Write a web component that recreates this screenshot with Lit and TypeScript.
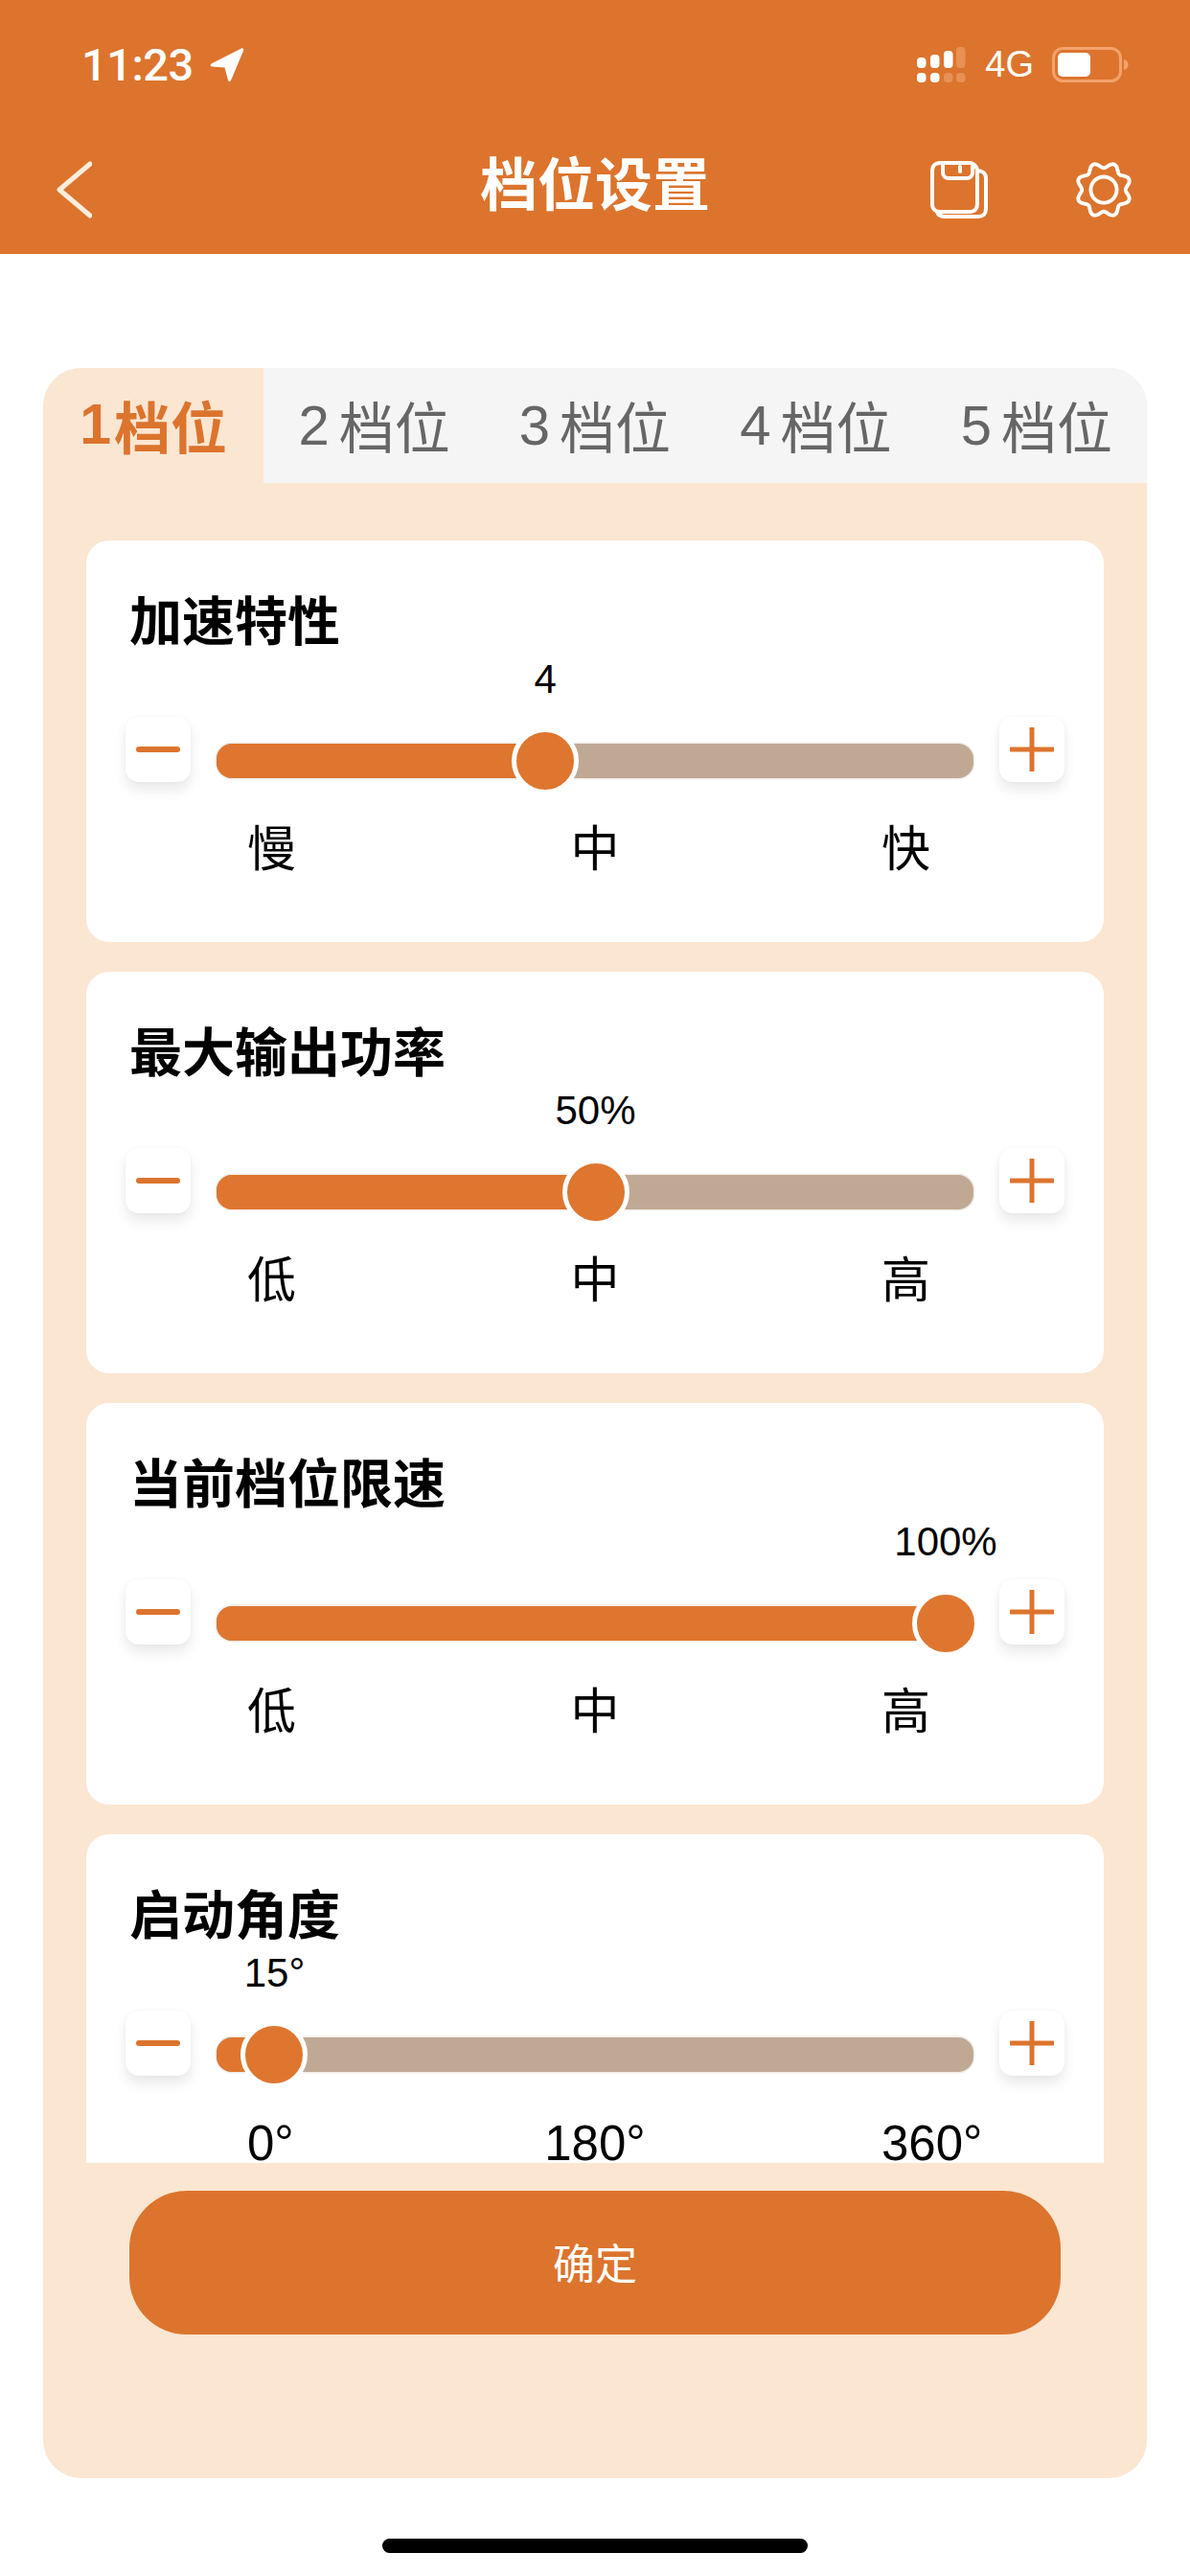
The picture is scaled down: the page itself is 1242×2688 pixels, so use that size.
import { LitElement, html, css, svg } from "lit";
import { customElement } from "lit/decorators.js";

interface Row { title: string; value: string; pct: number; labels: string[]; }

const ROWS: Row[] = [
  { title: "加速特性", value: "4", pct: 3 / 7, labels: ["慢", "中", "快"] },
  { title: "最大输出功率", value: "50%", pct: 0.5, labels: ["低", "中", "高"] },
  { title: "当前档位限速", value: "100%", pct: 1, labels: ["低", "中", "高"] },
  { title: "启动角度", value: "15°", pct: 15 / 360, labels: ["0°", "180°", "360°"] },
];

const TABS = ["1", "2", "3", "4", "5"];

function gearPath(): string {
  const pts: string[] = [];
  const n = 180;
  for (let i = 0; i < n; i++) {
    const t = (i / n) * Math.PI * 2;
    const r = 26.5 + 3 * Math.cos(8 * t + Math.PI);
    pts.push(`${(32 + r * Math.cos(t)).toFixed(2)},${(32 + r * Math.sin(t)).toFixed(2)}`);
  }
  return "M" + pts.join("L") + "Z";
}

@customElement("app-root")
export class AppRoot extends LitElement {
  static styles = css`
    :host {
      display: block;
      width: 1242px;
      height: 2688px;
      background: #fff;
      font-family: "Liberation Sans", "Noto Sans CJK SC", sans-serif;
      color: #000;
      overflow: hidden;
    }
    .header { height: 265px; background: #dc742d; color: #fff; display: flex; flex-direction: column; }
    .status { height: 130px; box-sizing: border-box; padding: 49px 64px 0 85px; display: flex; justify-content: space-between; align-items: flex-start; }
    .time-wrap { display: flex; align-items: center; gap: 17px; height: 37px; }
    .time { font-family: Roboto, "Liberation Sans", sans-serif; font-weight: 500; font-size: 47px; line-height: 37px; letter-spacing: -0.5px; }
    .sys { display: flex; align-items: center; height: 37px; }
    .net { font-size: 38px; line-height: 37px; margin: 0 19px 0 20px; }
    .nav { height: 135px; box-sizing: border-box; padding: 0 59px; display: grid; grid-template-columns: 1fr auto 1fr; align-items: center; }
    .title { font-size: 60px; font-weight: 700; line-height: 70px; margin-top: -5px; }
    .nav-right { display: flex; justify-content: flex-end; gap: 90px; align-items: center; }
    svg { display: block; }
    .panel { margin: 119px 45px 0; height: 2202px; background: #fbe6d2; border-radius: 40px; overflow: hidden; display: flex; flex-direction: column; }
    .tabs { height: 120px; flex: none; display: grid; grid-template-columns: repeat(5, 1fr); background: #f5f5f5; }
    .tab { display: flex; align-items: center; justify-content: center; font-size: 58px; color: #666; padding-bottom: 2px; }
    .tab .num { margin-right: 10px; }
    .tab.on { background: #fbe6d2; color: #dc742d; font-weight: 700; font-size: 59px; }
    .tab.on .num { margin-right: 3px; }
    .list { flex: none; height: 1753px; box-sizing: border-box; padding: 60px 45px 0; display: flex; flex-direction: column; gap: 31px; }
    .card { flex: none; height: 419px; background: #fff; border-radius: 24px; box-sizing: border-box; padding: 54px 41px 0; }
    .card:last-child { height: 343px; border-radius: 24px 24px 0 0; }
    .card-title { font-size: 55px; line-height: 62px; font-weight: 700; height: 60px; padding-left: 4px; }
    .slider { position: relative; height: 140px; }
    .value { font-size: 42px; line-height: 48px; transform: translateX(-50%); position: absolute; top: 7px; white-space: nowrap; }
    .row { position: absolute; left: 0; right: 0; top: 67px; display: flex; justify-content: space-between; }
    .btn { width: 68px; height: 68px; margin-top: 3px; background: #fff; border-radius: 14px; box-shadow: 0 8px 14px rgba(0, 0, 0, 0.09), 0 0 4px rgba(0, 0, 0, 0.03); flex: none; display: flex; justify-content: center; align-items: center; }
    .track { position: absolute; left: 95px; width: 790px; top: 31px; height: 36px; border-radius: 16px; background: #bfa995; box-shadow: 0 0 0 1.5px #f1ece7; }
    .fill { position: absolute; left: 0; top: 0; bottom: 0; background: #de762f; border-radius: 16px 0 0 16px; }
    .thumb { position: absolute; top: 18px; width: 60px; height: 60px; background: #de762f; border: 5px solid #fff; border-radius: 50%; transform: translate(-50%, -50%); box-sizing: content-box; }
    .labels { display: grid; grid-template-columns: 200px 326px auto; margin: 0 0 0 127px; position: relative; top: 51px; font-size: 51px; line-height: 36px; }
    .labels span:nth-child(2) { text-align: center; }
    .labels span:nth-child(3) { padding-left: 136px; }
    .ok { flex: none; align-self: center; margin-top: 29px; width: 972px; height: 150px; border-radius: 60px; background: #dc742d; color: #fff; font-size: 44px; display: flex; align-items: center; justify-content: center; padding-bottom: 2px; box-sizing: border-box; }
    .home { width: 444px; height: 15px; background: #000; border-radius: 8px; margin: 63px auto 0; }
  `;

  private renderRow(r: Row) {
    const x = 125 + 731 * r.pct; // thumb centre inside the slider row
    return html`
      <div class="card">
        <div class="card-title">${r.title}</div>
        <div class="slider">
          <div class="value" style="left:${x}px">${r.value}</div>
          <div class="row">
            <div class="btn">
              <svg width="46" height="46" viewBox="0 0 46 46"><path d="M3 23H43" stroke="#dc742d" stroke-width="6" stroke-linecap="round"/></svg>
            </div>
            <div class="btn">
              <svg width="46" height="46" viewBox="0 0 46 46"><path d="M1 23H45M23 1V45" stroke="#dc742d" stroke-width="5" stroke-linecap="round"/></svg>
            </div>
            <div class="track">
              <div class="fill" style="width:${x - 95}px"></div>
              <div class="thumb" style="left:${x - 95}px"></div>
            </div>
          </div>
        </div>
        <div class="labels">${r.labels.map((l) => html`<span>${l}</span>`)}</div>
      </div>
    `;
  }

  render() {
    return html`
      <div class="header">
        <div class="status">
          <div class="time-wrap">
            <span class="time">11:23</span>
            <svg width="36" height="37" viewBox="0 0 36 37"><path d="M1.500 17.500 33 1.500c1.400-.7 2.600.5 2.200 1.900L22 35c-.6 1.500-2.400 1.400-2.900-.1L15.500 21.500 2 20.500c-1.600-.2-1.900-2.200-.5-3Z" fill="#fff"/></svg>
          </div>
          <div class="sys">
            <svg width="51" height="37" viewBox="0 0 51 37">
              ${[[0, 11, 11], [14, 8, 14], [28, 4, 18]].map(([x, y, h]) => svg`<rect x="${x}" y="${y}" width="9.500" height="${h}" rx="4" fill="#fff"/>`)}
              <rect x="41" y="0" width="9.500" height="22" rx="4" fill="#e89155"/>
              <rect x="0" y="27" width="9.500" height="10" rx="4" fill="#fff"/>
              <rect x="14" y="27" width="9.500" height="10" rx="4" fill="#fff"/>
              <rect x="28" y="27" width="9.500" height="10" rx="4" fill="#e89155"/>
              <rect x="41" y="27" width="9.500" height="10" rx="4" fill="#e89155"/>
            </svg>
            <span class="net">4G</span>
            <svg width="80" height="37" viewBox="0 0 80 37">
              <rect x="1.500" y="1.500" width="70" height="34" rx="10" fill="none" stroke="#f3a26c" stroke-width="3"/>
              <rect x="6" y="6" width="34" height="25" rx="5" fill="#fff"/>
              <path d="M75 13c3 .6 4.500 2.800 4.500 5.500S78 23.400 75 24Z" fill="#f3a26c"/>
            </svg>
          </div>
        </div>
        <div class="nav">
          <svg width="37" height="60" viewBox="0 0 37 60"><path d="M35 3 3 30l32 27" fill="none" stroke="#ffeedd" stroke-width="5" stroke-linecap="round" stroke-linejoin="round"/></svg>
          <div class="title">档位设置</div>
          <div class="nav-right">
            <svg width="60" height="60" viewBox="0 0 60 60" fill="none" stroke="#fff" stroke-width="4" stroke-linecap="round" stroke-linejoin="round">
              <path d="M10 2H41c4 0 8 4 8 8V45c0 5-3 8-8 8H10c-5 0-8-3-8-8V10c0-5 3-8 8-8Z"/>
              <path d="M13 2V12c0 4 3 6 6 6H38c3 0 6-2 6-6V6"/>
              <path d="M31 6V11"/>
              <path d="M49 10c5 0 9 3 9 8V50c0 5-3 8-8 8H16c-5 0-8-2-9-5"/>
            </svg>
            <svg width="62" height="62" viewBox="0 0 64 64" fill="none" stroke="#fff" stroke-width="4" stroke-linejoin="round">
              <path d="${gearPath()}"/>
              <circle cx="32" cy="32" r="14"/>
            </svg>
          </div>
        </div>
      </div>
      <div class="panel">
        <div class="tabs">
          ${TABS.map((t, i) => html`<div class="tab ${i === 0 ? "on" : ""}"><span class="num">${t}</span><span>档位</span></div>`)}
        </div>
        <div class="list">${ROWS.map((r) => this.renderRow(r))}</div>
        <div class="ok">确定</div>
      </div>
      <div class="home"></div>
    `;
  }
}
